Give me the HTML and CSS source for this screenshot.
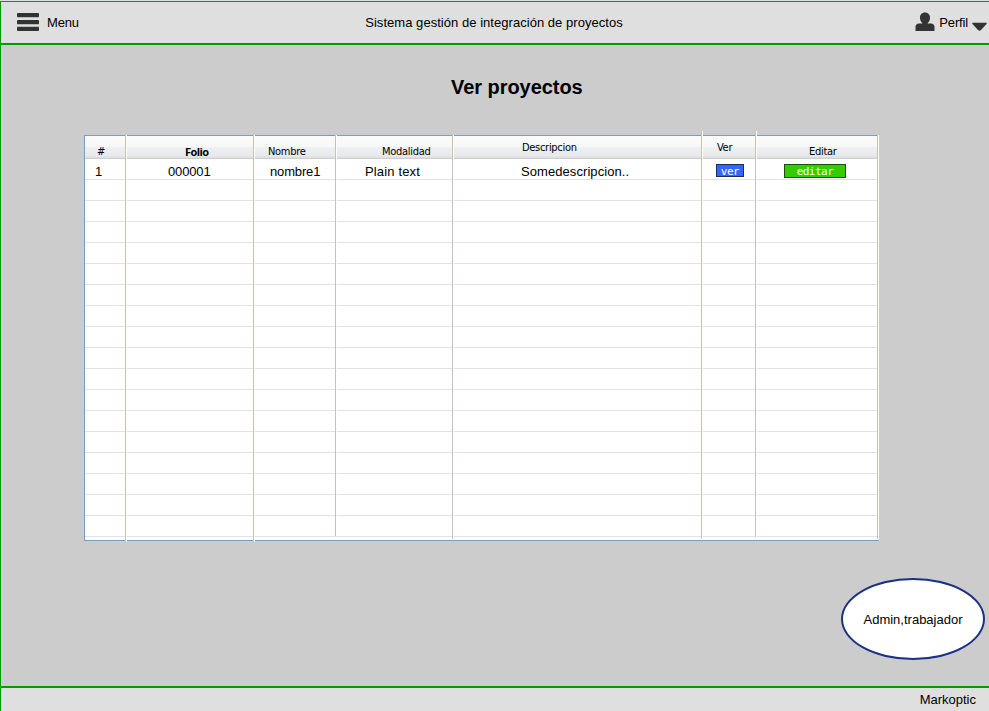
FILE: index.html
```html
<!DOCTYPE html>
<html lang="es">
<head>
<meta charset="utf-8">
<title>Ver proyectos</title>
<link rel="stylesheet" href="styles.css">
</head>
<body>
<div class="app">
  <header class="topbar">
    <div class="menu">
      <svg class="menu-icon" width="22" height="20" viewBox="0 0 22 20"><g fill="#b4bab4"><rect y="4" width="22" height="2"/><rect y="11" width="22" height="2"/><rect y="14" width="22" height="2"/></g><g fill="#333"><rect y="1" width="22" height="4" rx=".7"/><rect y="8" width="22" height="4" rx=".7"/><rect y="15" width="22" height="4" rx=".7"/></g></svg>
      <span class="menu-label">Menu</span>
    </div>
    <span class="brand">Sistema gestión de integración de proyectos</span>
    <div class="profile">
      <svg class="user-icon" width="20" height="20" viewBox="0 0 20 20"><path fill="#333" d="M10 .5c3 0 5 2.200 5 5.200 0 2.300-.9 4.200-2.300 5.200v.5h3.300c2.100 0 3.500 1.500 3.500 3.500V19H.5v-4.100c0-2 1.400-3.500 3.500-3.500h3.300v-.5C5.900 9.900 5 8 5 5.700 5 2.700 7 .5 10 .5z"/></svg>
      <span class="profile-label">Perfil</span>
      <svg class="caret" width="15" height="10" viewBox="0 0 15 10"><path fill="#333" d="M.3.800h14.400v1L9 8q-1.500 1.500-3 0L.3 1.800z"/></svg>
    </div>
  </header>
  <main class="content">
    <h1 class="title">Ver proyectos</h1>
    <section class="table">
      <div class="col num"><div class="head">#</div><div class="cell">1</div><div class="blank"></div></div>
      <div class="col folio"><div class="head">Folio</div><div class="cell">000001</div><div class="blank"></div></div>
      <div class="col nombre"><div class="head">Nombre</div><div class="cell">nombre1</div><div class="blank"></div></div>
      <div class="col modalidad"><div class="head">Modalidad</div><div class="cell">Plain text</div><div class="blank"></div></div>
      <div class="col descripcion"><div class="head high">Descripcion</div><div class="cell">Somedescripcion..</div><div class="blank"></div></div>
      <div class="col ver"><div class="head high">Ver</div><div class="cell"><a class="btn btn-ver">ver</a></div><div class="blank"></div></div>
      <div class="col editar"><div class="head">Editar</div><div class="cell"><a class="btn btn-editar">editar</a></div><div class="blank"></div></div>
    </section>
    <div class="roles">Admin,trabajador</div>
  </main>
  <footer class="footer">Markoptic</footer>
</div>
</body>
</html>
```
FILE: styles.css
```css
* { box-sizing: border-box; }
body {
  margin: 0;
  background: #dfdfdf;
  font: 13px/16px "Liberation Sans", Arial, sans-serif;
  color: #000;
}
.app {
  margin-top: 1px;
  height: 710px;
  display: flex;
  flex-direction: column;
  border-left: 1px solid #009b00;
  border-top: 1px solid #009b00;
  overflow: hidden;
}
.topbar {
  flex: 0 0 43px;
  margin-top: -1px;
  flex-basis: 44px;
  display: grid;
  grid-template-columns: 1fr auto 1fr;
  align-items: start;
  border-top: 1px solid #009b00;
  border-bottom: 2px solid #009b00;
  background: #dfdfdf;
  white-space: nowrap;
}
.menu { display: flex; padding: 10px 0 0 16px; }
.menu-label { margin: 3px 0 0 8px; letter-spacing: -0.2px; }
.brand { margin: 13px 2px 0 0; letter-spacing: 0.04px; }
.profile { display: flex; justify-content: flex-end; padding: 10px 2px 0 0; }
.profile-label { margin: 3px 4px 0 4px; letter-spacing: -0.15px; }
.caret { margin-top: 10px; }
.content {
  flex: 1;
  background: #ccc;
  display: flex;
  flex-direction: column;
}
.title {
  margin: 30px 0 0 450px;
  font-size: 20px;
  line-height: 24px;
  letter-spacing: -0.05px;
}
.table {
  margin: 36px 0 0 83px;
  width: 795px;
  height: 406px;
  display: grid;
  grid-template-columns: 42px 128px 82px 117px 249px 54px 122px;
  border: solid #7b9ebd;
  border-width: 1px 0 1px 1px;
  background: #fff;
}
.col { position: relative; white-space: nowrap; }
.col::after {
  content: "";
  position: absolute;
  top: var(--up, -1px);
  right: 0;
  width: 2px;
  height: var(--line, 402px);
  background: linear-gradient(90deg, #c5c2b2 50%, #fff 50%);
}
.head {
  height: 23px;
  padding: 9px 0 0 var(--hx);
  border-bottom: 1px solid #d0d0d0;
  background: linear-gradient(#fafafa 0, #f7f8f8 11px, #eef0f1 11px, #e7e9ea 20px, #dcdcdc 22px);
  font: 11px/14px "DejaVu Sans Condensed", Tahoma, sans-serif;
  letter-spacing: var(--ls, -0.3px);
}
.high { padding-top: 5px; }
.cell {
  height: 21px;
  padding: 5px 0 0 var(--cx);
  line-height: 15px;
}
.blank {
  height: 358px;
  margin-top: -1px;
  background: repeating-linear-gradient(#e2e2e2 0 1px, transparent 1px 21px);
}
.num { --hx: 12px; --cx: 10px; --line: 407px; }
.folio { --hx: 58px; --cx: 41px; --line: 407px; }
.folio .head { font-family: "Open Sans", sans-serif; font-weight: 700; letter-spacing: -0.8px; }
.folio .cell, .nombre .cell { letter-spacing: -0.15px; }
.folio .head { letter-spacing: -0.6px; }
.nombre { --hx: 13px; --cx: 15px; --line: 401px; }
.modalidad { --hx: 45px; --cx: 28px; --line: 404px; }
.modalidad .cell { letter-spacing: 0.15px; }
.descripcion { --hx: 68px; --cx: 67px; --up: -5px; --line: 408px; }
.descripcion .cell { letter-spacing: 0.07px; }
.ver { --hx: 14px; --cx: 13px; --up: -5px; --line: 406px; }
.editar { --hx: 52px; --cx: 27px; --line: 404px; }
.btn {
  display: block;
  height: 13px;
  border: 1px solid #1a2d5c;
  color: #fff;
  font: 11px/14px "DejaVu Sans Mono", monospace;
  letter-spacing: -0.5px;
  text-align: center;
}
.btn-ver { width: 28px; background: #36f; }
.btn-editar { width: 62px; height: 14px; border-color: #1c4f0c; background: #3c0; }
.roles {
  width: 144px;
  height: 82px;
  margin: 37px 0 0 840px;
  padding-top: 2px;
  display: flex;
  align-items: center;
  justify-content: center;
  border: 2px solid #1b3185;
  border-radius: 50%;
  background: #fff;
}
.footer {
  flex: 0 0 25px;
  padding: 4px 13px 0 0;
  border-top: 2px solid #009b00;
  background: #dfdfdf;
  text-align: right;
}
```
